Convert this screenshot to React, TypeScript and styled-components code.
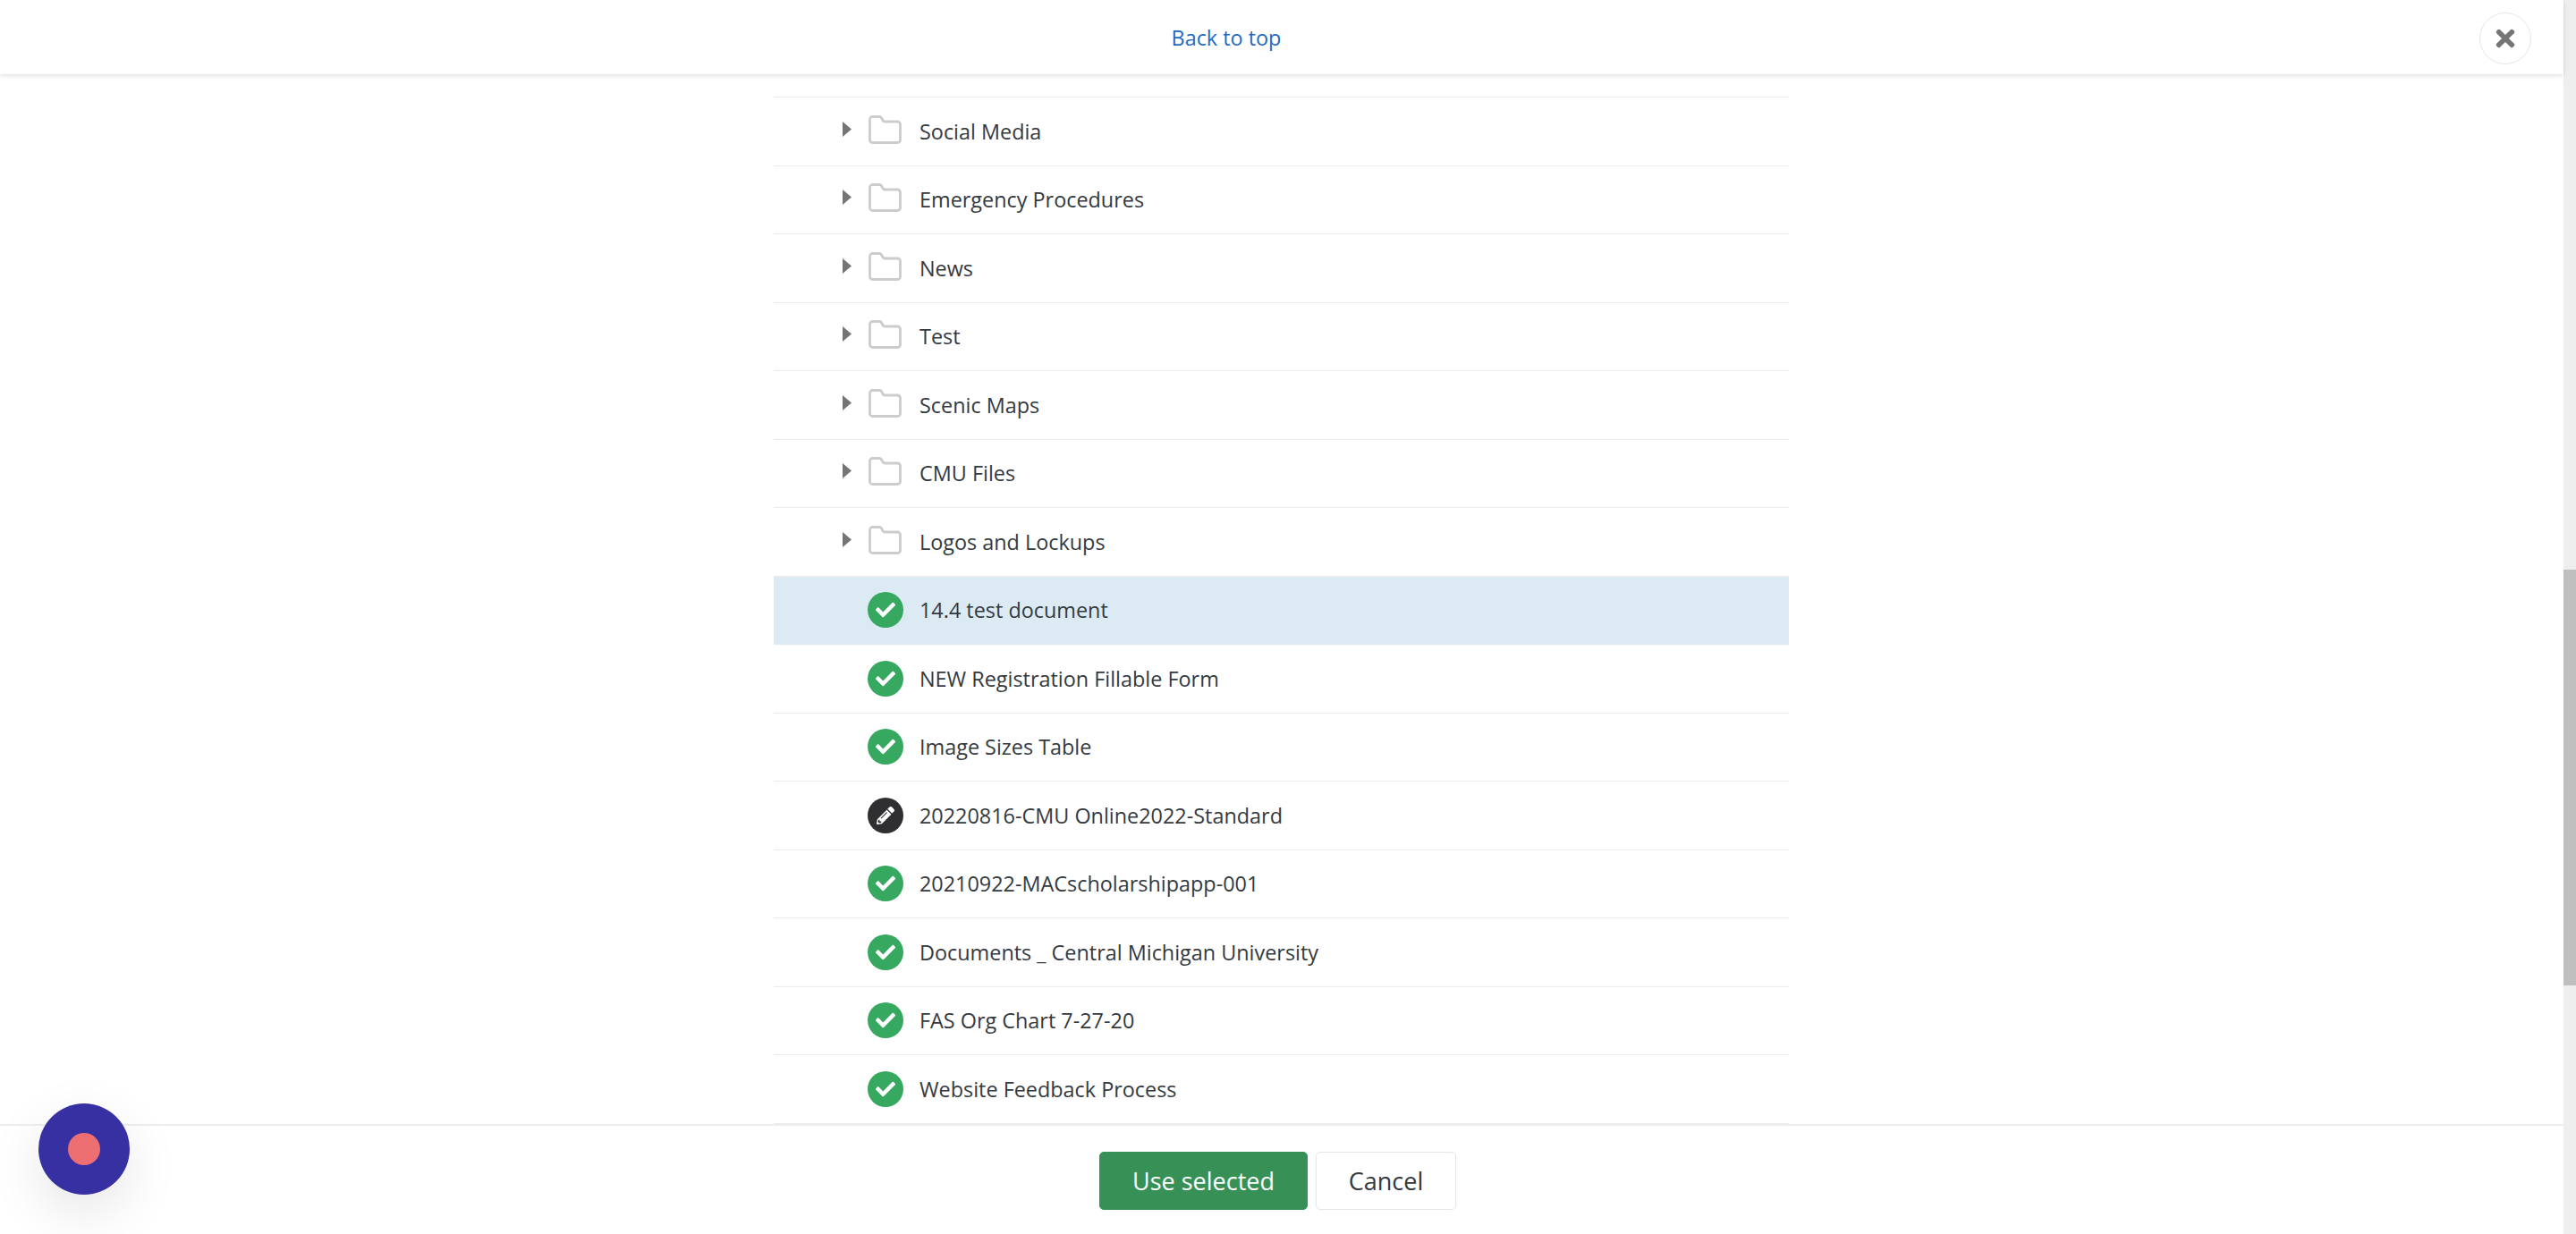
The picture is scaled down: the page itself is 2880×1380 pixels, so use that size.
import React from "react";
import styled, { createGlobalStyle } from "styled-components";
import { FaCheck, FaPencilAlt, FaTimes } from "react-icons/fa";

const Global = createGlobalStyle`
  html, body { margin: 0; padding: 0; background: #fff; overflow: hidden; }
  * { box-sizing: border-box; }
`;

const Page = styled.div`
  position: relative;
  display: flex;
  width: 2880px;
  height: 1380px;
  overflow: hidden;
  font-family: "Open Sans", "Liberation Sans", sans-serif;
  color: #343a40;
  background: #fff;
`;

const Main = styled.div`
  flex: 1;
  min-width: 0;
  display: flex;
  flex-direction: column;
`;

const TopBar = styled.header`
  position: relative;
  z-index: 2;
  flex: none;
  height: 83px;
  display: flex;
  align-items: center;
  justify-content: center;
  padding-right: 124px;
  background: #fff;
  box-shadow: 0 2px 5px rgba(0, 0, 0, 0.12);
`;

const BackLink = styled.a`
  font-size: 23.4px;
  color: #1f6bc1;
  text-decoration: none;
`;

const CloseButton = styled.button`
  position: absolute;
  top: 14px;
  right: 36px;
  width: 58px;
  height: 58px;
  display: flex;
  align-items: center;
  justify-content: center;
  padding: 0;
  background: #fff;
  border: 1px solid #e6e6e6;
  border-radius: 50%;
  color: #757575;
  font-size: 30px;
`;

const ListArea = styled.div`
  flex: 1;
  min-height: 0;
  padding: 25px 0 0 865px;
`;

const List = styled.ul`
  width: 1135px;
  margin: 0;
  padding: 0;
  list-style: none;
  border-top: 1px solid #ebebeb;
`;

const Row = styled.li<{ $selected?: boolean }>`
  height: 76.5px;
  display: flex;
  align-items: center;
  padding-left: 75px;
  border-bottom: 1px solid ${(p) => (p.$selected ? "#dbeaf3" : "#ebebeb")};
  background: ${(p) => (p.$selected ? "#dbeaf3" : "#fff")};
`;

const Caret = styled.svg`
  flex: none;
  width: 10px;
  height: 17px;
  margin: -5px 19px 0 2px;
  fill: #757575;
`;

const Folder = styled.svg`
  flex: none;
  width: 37px;
  height: 32px;
  margin: -4px 20px 0 0;
`;

const Badge = styled.span<{ $kind: "done" | "edit" }>`
  flex: none;
  width: 40px;
  height: 40px;
  margin: 0 18px 0 30px;
  display: flex;
  align-items: center;
  justify-content: center;
  border-radius: 50%;
  color: #fff;
  font-size: ${(p) => (p.$kind === "done" ? "22px" : "20px")};
  background: ${(p) => (p.$kind === "done" ? "#36a860" : "#2f2e30")};
`;

const Name = styled.span`
  font-size: 23.4px;
  line-height: 32px;
  color: #343a40;
`;

const BottomBar = styled.footer`
  position: relative;
  z-index: 2;
  flex: none;
  height: 123px;
  display: flex;
  justify-content: center;
  gap: 9px;
  padding: 29px 9px 0 0;
  background: #fff;
  border-top: 2px solid #eeeeee;
`;

const BaseButton = styled.button`
  height: 65px;
  font-family: inherit;
  font-size: 27px;
  border-radius: 5px;
`;

const PrimaryButton = styled(BaseButton)`
  width: 233px;
  color: #fff;
  background: #379157;
  border: 1px solid #379157;
`;

const SecondaryButton = styled(BaseButton)`
  width: 157px;
  color: #343a40;
  background: #fff;
  border: 1px solid #e6e6e6;
`;

const ScrollTrack = styled.div`
  flex: none;
  width: 14px;
  padding-top: 637px;
  background: #eeeeee;
`;

const ScrollThumb = styled.div`
  height: 465px;
  background: #bfbfbf;
`;

const Recorder = styled.div`
  position: absolute;
  z-index: 3;
  left: 43px;
  top: 1234px;
  width: 102px;
  height: 102px;
  display: flex;
  align-items: center;
  justify-content: center;
  border-radius: 50%;
  background: #3730a3;
  box-shadow: 0 20px 60px rgba(0, 0, 0, 0.1);
`;

const RecorderDot = styled.span`
  width: 36px;
  height: 36px;
  border-radius: 50%;
  background: #ee6f72;
`;

const folders = [
  "Social Media",
  "Emergency Procedures",
  "News",
  "Test",
  "Scenic Maps",
  "CMU Files",
  "Logos and Lockups",
];

const files: { name: string; kind: "done" | "edit"; selected?: boolean }[] = [
  { name: "14.4 test document", kind: "done", selected: true },
  { name: "NEW Registration Fillable Form", kind: "done" },
  { name: "Image Sizes Table", kind: "done" },
  { name: "20220816-CMU Online2022-Standard", kind: "edit" },
  { name: "20210922-MACscholarshipapp-001", kind: "done" },
  { name: "Documents _ Central Michigan University", kind: "done" },
  { name: "FAS Org Chart 7-27-20", kind: "done" },
  { name: "Website Feedback Process", kind: "done" },
];

const FolderIcon = () => (
  <Folder viewBox="0 0 37 32">
    <path
      d="M1.5 27.5V4.5a3 3 0 0 1 3-3h7.5a3 3 0 0 1 2.6 1.5l1.3 2.5a3 3 0 0 0 2.6 1.5h14a3 3 0 0 1 3 3v17.5a3 3 0 0 1-3 3h-28a3 3 0 0 1-3-3z"
      fill="none"
      stroke="#cccccc"
      strokeWidth="2.8"
    />
  </Folder>
);

export default function App() {
  return (
    <>
      <Global />
      <Page>
        <Main>
          <TopBar>
            <BackLink href="#top">Back to top</BackLink>
            <CloseButton aria-label="Close">
              <FaTimes />
            </CloseButton>
          </TopBar>
          <ListArea>
            <List>
              {folders.map((name) => (
                <Row key={name}>
                  <Caret viewBox="0 0 10 17">
                    <path d="M0 0 L10 8.5 L0 17 Z" />
                  </Caret>
                  <FolderIcon />
                  <Name>{name}</Name>
                </Row>
              ))}
              {files.map((file) => (
                <Row key={file.name} $selected={file.selected}>
                  <Badge $kind={file.kind}>{file.kind === "done" ? <FaCheck /> : <FaPencilAlt />}</Badge>
                  <Name>{file.name}</Name>
                </Row>
              ))}
            </List>
          </ListArea>
          <BottomBar>
            <PrimaryButton>Use selected</PrimaryButton>
            <SecondaryButton>Cancel</SecondaryButton>
          </BottomBar>
        </Main>
        <ScrollTrack>
          <ScrollThumb />
        </ScrollTrack>
        <Recorder>
          <RecorderDot />
        </Recorder>
      </Page>
    </>
  );
}
